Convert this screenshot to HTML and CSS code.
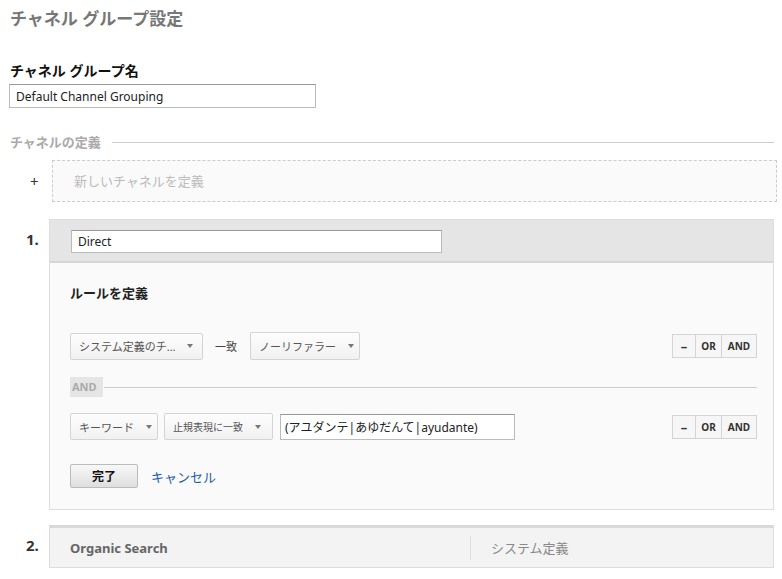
FILE: index.html
```html
<!DOCTYPE html>
<html lang="ja">
<head>
    <meta charset="UTF-8">
    <title>チャネル グループ設定</title>
    <link rel="stylesheet" href="styles.css">
</head>
<body>
    <h1 class="page-title">チャネル グループ設定</h1>

    <h2 class="field-label">チャネル グループ名</h2>
    <input class="text-input group-name" type="text" value="Default Channel Grouping">

    <div class="section-head">
        <span>チャネルの定義</span>
        <div class="rule-line"></div>
    </div>

    <div class="new-row">
        <span class="plus">+</span>
        <div class="new-box">新しいチャネルを定義</div>
    </div>

    <div class="channel">
        <div class="num">1.</div>
        <div class="card">
            <div class="card-head">
                <input class="text-input channel-name" type="text" value="Direct">
            </div>
            <div class="card-body">
                <h3 class="rule-title">ルールを定義</h3>

                <div class="rule-row">
                    <div class="conds">
                        <span class="select sel-dim">システム定義のチ…<i class="caret"></i></span>
                        <span class="match">一致</span>
                        <span class="select sel-val">ノーリファラー<i class="caret"></i></span>
                    </div>
                    <div class="btn-group">
                        <span class="bg-btn minus">&ndash;</span>
                        <span class="bg-btn or">OR</span>
                        <span class="bg-btn and">AND</span>
                    </div>
                </div>

                <div class="and-sep">
                    <span>AND</span>
                    <div class="rule-line"></div>
                </div>

                <div class="rule-row row2">
                    <div class="conds">
                        <span class="select sel-kw">キーワード<i class="caret"></i></span>
                        <span class="select sel-re">止規表現に一致<i class="caret"></i></span>
                        <input class="text-input rule-value" type="text" value="(アユダンテ|あゆだんて|ayudante)">
                    </div>
                    <div class="btn-group">
                        <span class="bg-btn minus">&ndash;</span>
                        <span class="bg-btn or">OR</span>
                        <span class="bg-btn and">AND</span>
                    </div>
                </div>

                <div class="actions">
                    <button class="done">完了</button>
                    <a href="#" class="cancel">キャンセル</a>
                </div>
            </div>
        </div>
    </div>

    <div class="channel">
        <div class="num">2.</div>
        <div class="card closed">
            <div class="closed-name">Organic Search</div>
            <div class="closed-type">システム定義</div>
        </div>
    </div>
</body>
</html>
```

FILE: styles.css
```css
body {
    margin: 0;
    padding: 0 8px 0 10px;
    font-family: "Noto Sans", "Noto Sans CJK JP", sans-serif;
    font-size: 12px;
    color: #333;
    background-color: #fff;
}
.page-title {
    margin: 0;
    padding-top: 8px;
    height: 30px;
    font-size: 17px;
    font-weight: bold;
    color: #777;
    line-height: 22px;
}
.field-label {
    margin: 23px 0 0;
    font-size: 14px;
    font-weight: bold;
    color: #111;
    line-height: 20px;
}
.text-input {
    display: block;
    box-sizing: border-box;
    border: 1px solid #bbb;
    border-top-color: #999;
    background: #fff;
    font-family: inherit;
    font-size: 12px;
    color: #222;
    padding: 0 6px;
    margin: 0;
}
.group-name {
    width: 307px;
    height: 24px;
    margin-top: 3px;
    margin-left: -1px;
}
.section-head {
    display: flex;
    align-items: center;
    margin-top: 25px;
    color: #aaa;
    font-weight: bold;
    font-size: 13px;
    line-height: 18px;
}
.section-head span {
    margin-right: 11px;
}
.rule-line {
    flex: 1;
    height: 1px;
    background: #ccc;
}
.new-row {
    display: flex;
    align-items: center;
    margin-top: 9px;
    margin-right: -3px;
}
.plus {
    width: 42px;
    padding-left: 20px;
    box-sizing: border-box;
    font-size: 15px;
    color: #333;
}
.new-box {
    flex: 1;
    height: 42px;
    box-sizing: border-box;
    border: 1px dashed #ccc;
    background: #fafafa;
    color: #bbb;
    font-size: 13px;
    padding-left: 21px;
    line-height: 40px;
}
.channel {
    display: flex;
    margin-top: 17px;
}
.channel + .channel {
    margin-top: 15px;
}
.num {
    width: 39px;
    padding-left: 16px;
    box-sizing: border-box;
    font-size: 15px;
    font-weight: bold;
    color: #333;
    padding-top: 10px;
}
.card {
    flex: 1;
    border: 1px solid #ddd;
    background: #fafafa;
}
.card-head {
    background: #e5e5e5;
    border-bottom: 2px solid #d6d6d6;
    padding: 10px 21px 8px;
}
.channel-name {
    width: 371px;
    height: 23px;
}
.card-body {
    padding: 20px 16px 21px 20px;
}
.rule-title {
    margin: 0;
    font-size: 13px;
    font-weight: bold;
    color: #222;
    line-height: 20px;
}
.rule-row {
    display: flex;
    justify-content: space-between;
    align-items: center;
    margin-top: 29px;
}
.conds {
    display: flex;
    align-items: center;
}
.select {
    display: inline-flex;
    align-items: center;
    box-sizing: border-box;
    height: 27px;
    border: 1px solid #d4d4d4;
    border-radius: 2px;
    background: linear-gradient(#fdfdfd, #f1f1f1);
    color: #555;
    font-size: 11px;
    padding: 0 8px 0 8px;
    white-space: nowrap;
}
.caret {
    display: inline-block;
    width: 0;
    height: 0;
    border-left: 3px solid transparent;
    border-right: 3px solid transparent;
    border-top: 4px solid #777;
    margin-left: 12px;
}
.sel-dim {
    width: 133px;
}
.match {
    margin: 0 13px 0 12px;
    font-size: 11px;
    color: #444;
}
.sel-val {
    width: 110px;
    height: 28px;
}
.sel-kw {
    width: 88px;
}
.sel-re {
    width: 109px;
    margin-left: 6px;
    font-size: 10px;
}
.rule-value {
    width: 235px;
    height: 26px;
    margin-left: 7px;
    font-size: 12px;
    padding-left: 4px;
}
.btn-group {
    display: flex;
    height: 24px;
}
.bg-btn {
    box-sizing: border-box;
    height: 24px;
    border: 1px solid #d4d4d4;
    background: #f6f6f6;
    font-size: 10px;
    font-weight: bold;
    color: #333;
    line-height: 22px;
    text-align: center;
}
.bg-btn + .bg-btn {
    border-left: none;
}
.minus {
    width: 24px;
    font-size: 13px;
}
.or {
    width: 26px;
}
.and {
    width: 35px;
}
.and-sep {
    display: flex;
    align-items: center;
    margin-top: 17px;
    color: #aaa;
    font-weight: bold;
    font-size: 11px;
}
.and-sep span {
    background: #e5e5e5;
    padding: 0 2px;
    line-height: 20px;
    width: 33px;
    box-sizing: border-box;
    margin-right: 1px;
}
.row2 {
    margin-top: 16px;
}
.actions {
    display: flex;
    align-items: center;
    margin-top: 24px;
}
.done {
    width: 68px;
    height: 24px;
    border: 1px solid #bbb;
    border-radius: 2px;
    background: linear-gradient(#f8f8f8, #dedede);
    font-family: inherit;
    font-size: 12px;
    font-weight: bold;
    color: #111;
    padding: 0;
}
.cancel {
    margin-left: 13px;
    color: #1a5ea8;
    font-size: 13px;
    text-decoration: none;
}
.closed {
    display: flex;
    align-items: center;
    height: 43px;
    box-sizing: border-box;
    border-top: 3px solid #d9d9d9;
    background: #f3f3f3;
}
.closed-name {
    width: 420px;
    padding-left: 20px;
    box-sizing: border-box;
    font-size: 13px;
    font-weight: bold;
    color: #666;
}
.closed-type {
    border-left: 1px solid #ddd;
    height: 24px;
    line-height: 24px;
    padding-left: 20px;
    color: #888;
    font-size: 13px;
}
```
